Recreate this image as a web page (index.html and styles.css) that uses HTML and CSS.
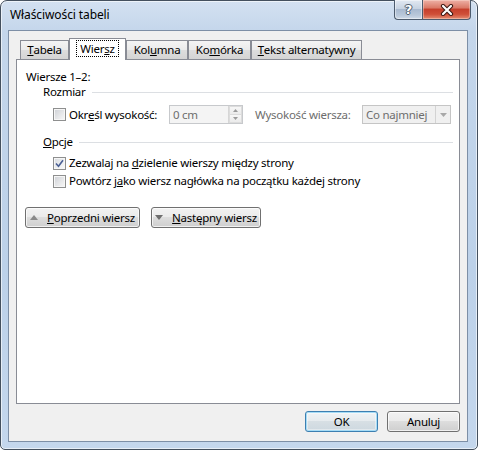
FILE: index.html
```html
<!DOCTYPE html>
<html lang="pl">
<head>
<meta charset="utf-8">
<title>Właściwości tabeli</title>
<link rel="stylesheet" href="styles.css">
</head>
<body>
<div class="window">
  <div class="titlebar">
    <span class="title">Właściwości tabeli</span>
    <div class="caption">
      <div class="cap-btn help"><span>?</span></div>
      <div class="cap-btn close">
        <svg width="16" height="12" viewBox="0 0 16 12">
          <path d="M4 2 L12 10 M12 2 L4 10" stroke="#3b1812" stroke-width="4.2" stroke-linecap="round"/>
          <path d="M4 2 L12 10 M12 2 L4 10" stroke="#ffffff" stroke-width="2.2" stroke-linecap="round"/>
        </svg>
      </div>
    </div>
  </div>
  <div class="client">
    <div class="tabs">
      <div class="tab t1"><u>T</u>abela</div>
      <div class="tab active t2"><span class="focus">Wier<u>s</u>z</span></div>
      <div class="tab t3">Kol<u>u</u>mna</div>
      <div class="tab t4">Ko<u>m</u>órka</div>
      <div class="tab t5"><u>T</u>ekst alternatywny</div>
    </div>
    <div class="panel">
      <div class="rows-title">Wiersze 1–2:</div>
      <div class="group-head"><span>Rozmiar</span><i class="rule"></i></div>
      <div class="size-row">
        <div class="check lbl-size"><span class="cb"></span><span>Okr<u>e</u>śl wysokość:</span></div>
        <div class="spin">
          <span class="spin-val">0 cm</span>
          <span class="spin-btns">
            <span class="sb"><svg width="5" height="3" viewBox="0 0 5 3"><path d="M0 3 L2.5 0 L5 3 Z" fill="#9a9a9a"/></svg></span>
            <span class="sb"><svg width="5" height="3" viewBox="0 0 5 3"><path d="M0 0 L2.5 3 L5 0 Z" fill="#9a9a9a"/></svg></span>
          </span>
        </div>
        <span class="dis-label">Wysokość wiersza:</span>
        <div class="combo">
          <span class="combo-val">Co najmniej</span>
          <span class="combo-btn"><svg width="7" height="4" viewBox="0 0 7 4"><path d="M0 0 L3.5 4 L7 0 Z" fill="#a8a8a8"/></svg></span>
        </div>
      </div>
      <div class="group-head opts"><span><u>O</u>pcje</span><i class="rule"></i></div>
      <div class="check-row">
        <span class="cb checked"><svg width="9" height="9" viewBox="0 0 9 9"><path d="M1 4.5 L3.5 7.2 L8 1.2" fill="none" stroke="#4a5f94" stroke-width="1.6"/></svg></span>
        <span>Zezwalaj na <u>d</u>zielenie wierszy między strony</span>
      </div>
      <div class="check-row">
        <span class="cb"></span>
        <span>Powtórz j<u>a</u>ko wiersz nagłówka na początku każdej strony</span>
      </div>
      <div class="nav-btns">
        <button class="btn nav prev"><svg width="8" height="5" viewBox="0 0 8 5"><path d="M0 5 L4 0 L8 5 Z" fill="#8a8a8a"/></svg><span><u>P</u>oprzedni wiersz</span></button>
        <button class="btn nav next"><svg width="8" height="5" viewBox="0 0 8 5"><path d="M0 0 L4 5 L8 0 Z" fill="#6e6e6e"/></svg><span><u>N</u>astępny wiersz</span></button>
      </div>
    </div>
    <div class="footer">
      <button class="btn dlg default">OK</button>
      <button class="btn dlg">Anuluj</button>
    </div>
  </div>
</div>
</body>
</html>
```

FILE: styles.css
```css
* { box-sizing: border-box; }
html, body { margin: 0; padding: 0; }
body {
  width: 478px;
  height: 450px;
  overflow: hidden;
  background: #ffffff;
  font-family: "Noto Sans", "Open Sans", sans-serif;
  font-size: 11.5px;
  letter-spacing: -0.25px;
  color: #000;
}
u { text-decoration: underline; text-underline-offset: 1px; }

.window {
  width: 478px;
  height: 450px;
  border: 1px solid #44505e;
  border-radius: 7px 7px 5px 5px;
  background: linear-gradient(180deg, #d3e1f1 0, #c4d6eb 30px, #bcd1e9 60%, #c4d7ed 100%);
  box-shadow: inset 0 0 0 1px rgba(255,255,255,0.6);
  padding: 0 9px 7px 7px;
  display: flex;
  flex-direction: column;
}

.titlebar {
  height: 29px;
  margin: 0 -9px 0 -7px;
  padding-left: 9px;
  display: flex;
  align-items: flex-start;
}
.title {
  padding-top: 6px;
  font-size: 12px;
  line-height: 16px;
  letter-spacing: -0.1px;
  color: #000;
}
.caption {
  margin-left: auto;
  margin-right: 6px;
  display: flex;
  margin-top: -1px;
}
.cap-btn {
  height: 20px;
  border: 1px solid #4c5b6d;
  border-top: none;
  display: flex;
  align-items: center;
  justify-content: center;
}
.help {
  width: 28px;
  border-right: none;
  border-radius: 0 0 0 4px;
  background: linear-gradient(180deg, #e2e9f2 0, #c7d3e2 45%, #a9bad0 50%, #b9c8da 80%, #d0dbe8 100%);
  box-shadow: inset 0 0 0 1px rgba(255,255,255,0.45);
}
.help span {
  font-family: "DejaVu Sans", sans-serif;
  font-weight: bold;
  font-size: 13px;
  color: #ffffff;
  line-height: 1;
  text-shadow: 0 0 1px #2e3b4c, 1px 0 0 #5a6779, -1px 0 0 #5a6779, 0 1px 0 #5a6779, 0 -1px 0 #5a6779;
}
.close {
  width: 49px;
  border-radius: 0 0 4px 0;
  background: linear-gradient(180deg, #eeb1a6 0, #db7b69 40%, #c6402c 50%, #cf4f38 75%, #e48d72 100%);
  box-shadow: inset 0 0 0 1px rgba(255,230,220,0.4);
}

.client {
  flex: 1;
  background: #f0f0f0;
  border: 1px solid #7d8fa6;
  padding: 7px 7px 0 7px;
  display: flex;
  flex-direction: column;
}

.tabs {
  height: 22px;
  margin-bottom: -1px;
  padding-left: 4px;
  display: flex;
  align-items: flex-end;
}
.tab {
  height: 20px;
  border: 1px solid #898c95;
  border-bottom: none;
  background: linear-gradient(180deg, #f4f4f4 0, #ebebeb 45%, #dddddd 50%, #d3d3d3 100%);
  display: flex;
  align-items: center;
  justify-content: center;
  padding-bottom: 1px;
  line-height: 14px;
}
.t1 { width: 49px; }
.t2 { width: 57px; }
.t3 { width: 62px; }
.t4 { width: 63px; }
.t5 { width: 111px; }
.tab.active {
  height: 22px;
  background: #ffffff;
  position: relative;
  z-index: 1;
  padding-bottom: 2px;
}
.focus {
  outline: 1px dotted #000;
  outline-offset: 0;
  padding: 0 3px;
  line-height: 15px;
}

.panel {
  height: 345px;
  background: #ffffff;
  border: 1px solid #898c95;
  padding: 9px 6px 0 9px;
  display: flex;
  flex-direction: column;
  line-height: 16px;
}

.rows-title { height: 16px; }

.group-head {
  margin-left: 17px;
  height: 16px;
  display: flex;
  align-items: center;
  gap: 6px;
  margin-top: -1px;
}
.group-head .rule {
  flex: 1;
  height: 1px;
  background: #dcdfe3;
}
.group-head.opts { margin-top: 10px; }

.size-row {
  margin-top: 5px;
  margin-left: 27px;
  height: 19px;
  display: flex;
  align-items: center;
}
.check {
  display: flex;
  align-items: center;
  gap: 3px;
}
.lbl-size { width: 116px; }

.cb {
  width: 13px;
  height: 13px;
  flex: none;
  border: 1px solid #8e8f8f;
  background: linear-gradient(135deg, #cdd0d5 0, #e6e7e9 55%, #f8f8f8 100%);
  box-shadow: inset 0 0 0 1px #f6f6f6;
  display: flex;
  align-items: center;
  justify-content: center;
}
.cb.checked {
  background: linear-gradient(135deg, #d6d9de 0, #eceef0 55%, #fafafa 100%);
}

.spin {
  width: 74px;
  height: 19px;
  border: 1px solid #c7c9cc;
  background: #f4f4f4;
  display: flex;
  align-items: center;
  color: #6d6d6d;
}
.spin-val { padding-left: 3px; flex: 1; }
.spin-btns {
  width: 14px;
  height: 17px;
  display: flex;
  flex-direction: column;
  border-left: 1px solid #d6d6d6;
}
.sb {
  flex: 1;
  display: flex;
  align-items: center;
  justify-content: center;
  background: linear-gradient(180deg, #f7f7f7, #ebebeb);
  border: 1px solid #dcdcdc;
}
.sb + .sb { border-top: none; }

.dis-label {
  width: 107px;
  margin-left: 12px;
  color: #6d6d6d;
}

.combo {
  width: 89px;
  height: 19px;
  border: 1px solid #c5c5c5;
  background: #f0f0f0;
  display: flex;
  align-items: center;
  color: #6d6d6d;
}
.combo-val { flex: 1; padding-left: 3px; white-space: nowrap; }
.combo-btn {
  width: 15px;
  height: 17px;
  border-left: 1px solid #d3d3d3;
  display: flex;
  align-items: center;
  justify-content: center;
}

.check-row {
  margin-left: 27px;
  height: 18px;
  display: flex;
  align-items: center;
  gap: 3px;
}
.opts + .check-row { margin-top: 4px; }

.nav-btns {
  margin-top: 17px;
  margin-left: -1px;
  display: flex;
  gap: 11px;
}

.btn {
  font-family: inherit;
  font-size: inherit;
  letter-spacing: inherit;
  color: #000;
  height: 21px;
  border: 1px solid #707070;
  border-radius: 3px;
  background: linear-gradient(180deg, #f2f2f2 0, #ebebeb 45%, #dddddd 50%, #cfcfcf 100%);
  box-shadow: inset 0 0 0 1px rgba(255,255,255,0.7);
  padding: 0;
  margin: 0;
  display: flex;
  align-items: center;
  justify-content: center;
  line-height: 16px;
}
.nav { gap: 9px; }
.prev { width: 115px; }
.next { width: 110px; }

.footer {
  margin-top: 7px;
  display: flex;
  justify-content: flex-end;
  gap: 9px;
}
.dlg { width: 73px; }
.dlg.default {
  border-color: #3c7fb1;
  box-shadow: inset 0 0 0 1px #a6dcf6, inset 0 0 0 2px rgba(255,255,255,0.4);
  background: linear-gradient(180deg, #f0f3f5 0, #e6ebee 45%, #d7dfe4 50%, #cdd8df 100%);
}
```
